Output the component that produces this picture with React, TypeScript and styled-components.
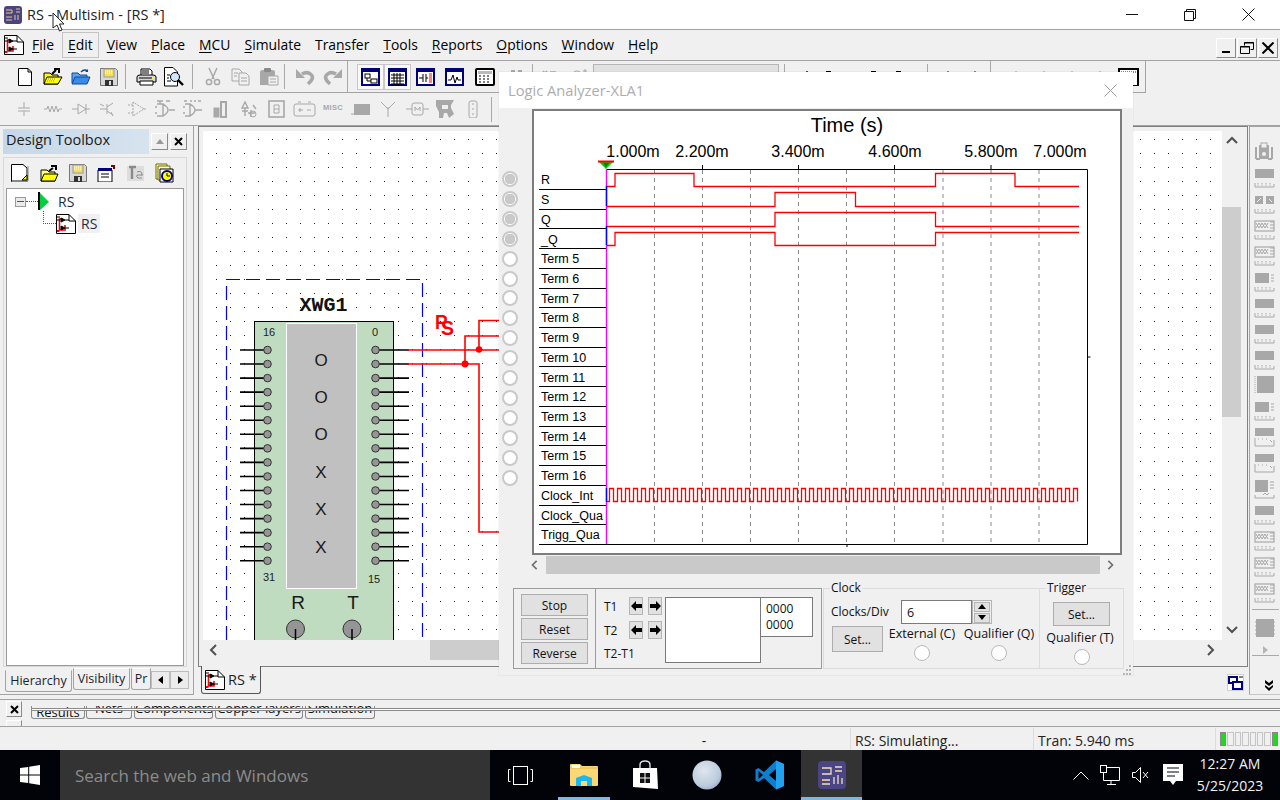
import React from "react";
import styled, { createGlobalStyle } from "styled-components";

const UI = `"Open Sans","Noto Sans",sans-serif`;
const ARIAL = `"Liberation Sans",Arial,sans-serif`;

const Global = createGlobalStyle`
  html, body { margin: 0; padding: 0; background: #f0f0f0; }
  body { font-family: ${UI}; color: #000; }
  * { box-sizing: border-box; }
  svg { display: block; }
`;

const Root = styled.div`
  position: relative; width: 1280px; height: 800px; overflow: hidden;
  display: flex; flex-direction: column; background: #f0f0f0;
`;
/* ---------- title ---------- */
const TitleBar = styled.div`
  height: 30px; background: #fff; border-bottom: 1px solid #a3a3a3;
  display: flex; align-items: center; padding: 0 4px 0 3px; gap: 4px; flex: none;
`;
const TitleText = styled.div`font-size: 14.5px; color: #222; flex: 1; margin-top: -1px;`;
const WinCtl = styled.div`width: 54.5px; height: 29px; display: flex; align-items: center; justify-content: center;`;
/* ---------- menu ---------- */
const MenuBar = styled.div`
  height: 31px; display: flex; align-items: flex-start; padding: 5px 0 0 4px;
  border-bottom: 1px solid #a3a3a3; flex: none; position: relative;
`;
const MenuList = styled.div`display: flex; gap: 2px; margin: -3px 0 0 2px; flex: 1;`;
const MenuItem = styled.div<{ $hover?: boolean }>`
  font-size: 13.9px; line-height: 23px; height: 26px; padding: 0 5px;
  border: 1px solid ${p => (p.$hover ? "#c4c4c4" : "transparent")};
  u { text-underline-offset: 2px; }
`;
const MdiGroup = styled.div`display: flex; gap: 1px; margin-right: 2px; margin-top: 3px;`;
const MdiBtn = styled.div`
  width: 20px; height: 20px; background: #f0f0f0;
  border: 1px solid; border-color: #fff #8a8a8a #8a8a8a #fff;
  display: flex; align-items: center; justify-content: center;
`;
/* ---------- toolbars ---------- */
const Toolbar = styled.div<{ $h: number }>`
  height: ${p => p.$h}px; flex: none; display: flex; align-items: center; padding-left: 11px;
  border-bottom: 1px solid #a3a3a3;
`;
const ToolbarTop = styled(Toolbar)`position: relative;`;
const ToolEnd = styled.div`
  position: absolute; left: 1145px; top: 0; width: 135px; height: 32px;
  background: #f0f0f0; border-left: 1px solid #a3a3a3;
`;
const Slot = styled.div<{ $w?: number; $on?: boolean; $start?: boolean }>`
  width: ${p => p.$w ?? 28}px; height: 26px; flex: none;
  display: flex; align-items: center; justify-content: ${p => (p.$start ? "flex-start" : "center")};
  ${p => (p.$on ? "background:#f8f8f8;box-shadow: inset 0 0 0 1px #c8c8c8;" : "")}
`;
const Sep = styled.div<{ $l?: number; $r?: number; $full?: boolean }>`
  width: 1px; background: #a9a9a9; flex: none;
  height: ${p => (p.$full ? 31 : 25)}px;
  margin-left: ${p => p.$l ?? 0}px; margin-right: ${p => p.$r ?? 0}px;
`;
const Combo = styled.div`width: 186px; height: 24px; background: #e1e1e1; border: 1px solid #b5b5b5; flex: none; align-self: flex-start; margin-top: 3px;`;
/* ---------- main ---------- */
const Main = styled.div`
  height: 574px; display: grid; grid-template-columns: 194px 1054px 32px; flex: none;
`;
const LeftDock = styled.div`
  height: 569px; border-right: 1px solid #a3a3a3; border-bottom: 1px solid #a3a3a3;
  padding: 3px 6px 0 3px; display: flex; flex-direction: column;
`;
const DockHead = styled.div`display: flex; align-items: center; height: 25px; flex: none;`;
const DockTitle = styled.div`
  width: 147px; height: 25px; padding-left: 3px; font-size: 14.5px; line-height: 22px; color: #1a1a1a;
  background: linear-gradient(90deg, #c6d8e8, #d6e3ef);
`;
const HeadBtn = styled.div`
  width: 17px; height: 17px; margin-left: 2px; background: #f0f0f0;
  border: 1px solid; border-color: #fff #8a8a8a #8a8a8a #fff;
  display: flex; align-items: center; justify-content: center;
  &:first-of-type { margin-left: 3px; }
`;
const DockBody = styled.div`
  margin-top: 3px; height: 510px; border: 1px solid #d8d8d8; padding: 0 2px 0 2px;
  display: flex; flex-direction: column; flex: none;
`;
const DockTools = styled.div`height: 30px; display: flex; align-items: center; padding-left: 5px; flex: none;`;
const DockTool = styled.div`width: 30px; display: flex; justify-content: flex-start;`;
const Tree = styled.div`
  flex: 1; background: #fff; border: 1px solid #9a9a9a; position: relative; padding: 3px 0 0 8px;
`;
const TreeRow = styled.div`display: flex; align-items: center; height: 19px;`;
const TreeChild = styled(TreeRow)`margin: 3px 0 0 41px; gap: 2px;`;
const Expander = styled.div`
  width: 11px; height: 10px; border: 1px solid #9a9a9a; background: #eaeaea; display: flex; align-items: center; justify-content: center; flex: none;
  &::after { content: ""; width: 7px; height: 1px; background: #555; }
`;
const Dotted = styled.div`width: 12px; border-top: 1px dotted #555; flex: none;`;
const Elbow = styled.div`
  position: absolute; left: 36px; top: 22px; width: 13px; height: 13px;
  border-left: 1px dotted #555; border-bottom: 1px dotted #555;
`;
const TreeLabel = styled.div<{ $sel?: boolean }>`
  font-size: 14px; line-height: 19px; color: #1d2a44; padding: 0 3px;
  ${p => (p.$sel ? "background:#f0f0f0;" : "margin-left:5px;")}
`;
const DockTabs = styled.div`display: flex; align-items: flex-start; height: 26px; padding: 1px 0 0 2px; flex: none;`;
const DTab = styled.div<{ $active?: boolean; $w: number }>`
  width: ${p => p.$w}px; font-size: 12.5px; text-align: center; white-space: nowrap; overflow: hidden; flex: none;
  height: 22px; line-height: 20px; color: #1d1d2a;
  margin-top: ${p => (p.$active ? 2 : 0)}px; background: #f0f0f0;
  border: 1px solid #a3a3a3; border-top-color: ${p => (p.$active ? "transparent" : "#fff")};
  border-radius: 0 0 3px 3px; margin-right: 1px;
`;
const DArrows = styled.div`display: flex; margin: 3px 0 0 -1px; flex: none;`;
const DArrow = styled.div`
  width: 19px; height: 18px; border: 1px solid #bdbdbd; background: #ececec;
  display: flex; align-items: center; justify-content: center;
`;
const Workspace = styled.div`display: flex; flex-direction: column; padding: 0 0 0 4px;`;
const Frame = styled.div`
  height: 541px; border: 1px solid #808080; padding: 4px 5px 6px 4px; flex: none;
  display: grid; grid-template-columns: 1019px 19px; grid-template-rows: 509px 20px;
`;
const Canvas = styled.div`
  background-color: #fff; position: relative; overflow: hidden;
  background-image: radial-gradient(circle at 13.5px 8.5px, #222 0.72px, transparent 0.85px);
  background-size: 14px 14px;
`;
const Schematic = styled.svg`position: absolute; left: 0; top: 0;`;
const VBar = styled.div`display: flex; flex-direction: column; align-items: stretch; justify-content: space-between; background: #f0f0f0; position: relative;`;
const VThumb = styled.div`position: absolute; left: 0; right: 0; top: 76px; height: 210px; background: #cdcdcd;`;
const ArrowBox = styled.div`height: 20px; display: flex; align-items: center; justify-content: center;`;
const HBar = styled.div`
  grid-column: 1 / span 2; display: flex; align-items: center; justify-content: space-between;
  background: #f0f0f0; position: relative; padding: 0 25px 0 5px;
`;
const HThumb = styled.div`position: absolute; left: 227px; width: 300px; top: 0; bottom: 0; background: #cdcdcd;`;
const DocTabs = styled.div`height: 27px; display: flex; position: relative; flex: none;`;
const DocTab = styled.div`
  width: 60px; height: 28px; margin: -1px 0 0 3px; background: #f0f0f0; flex: none;
  border: 1px solid #555; border-top: none; border-radius: 0 0 3px 3px;
  display: flex; align-items: center; gap: 3px; padding-left: 3px; font-size: 14.5px; color: #222;
`;
const LayoutBtn = styled.div`
  position: absolute; left: 1029px; top: 7px; width: 17px; height: 17px; background: #fff;
  border: 1px solid #d0d0d0; display: flex; align-items: center; justify-content: center;
`;
const RightDock = styled.div`
  border-left: 1px solid #a3a3a3; border-top: 1px solid #a3a3a3; border-bottom: 1px solid #c8c8c8; margin-left: 1px; display: flex; flex-direction: column; align-items: center;
  padding: 15px 0 0 0; height: 569px; position: relative;
`;
const GateSlot = styled.div`height: 25.95px; width: 22px; flex: none;`;
const RightSep = styled.div`width: 27px; height: 1px; background: #a9a9a9; flex: none; margin: 0;`;
const ChipWrap = styled.div`height: 45px; padding-top: 8px; display: flex; flex-direction: column; align-items: center; gap: 8px; flex: none;`;
const ExpandBtn = styled.div`position: absolute; right: 6px; top: 553px;`;
/* ---------- bottom ---------- */
const BottomDock = styled.div`
  height: 28px; flex: none; border-top: 1px solid #a3a3a3; border-bottom: 1px solid #a3a3a3; margin-top: -1px;
  display: flex; position: relative; overflow: hidden; padding-left: 6px; padding-top: 1px; align-items: flex-start;
`;
const CloseBtn = styled.div`
  width: 16px; height: 16px; background: #f0f0f0; border: 1px solid; border-color: #fff #8a8a8a #8a8a8a #fff;
  display: flex; align-items: center; justify-content: center; flex: none;
`;
const CloseBtnStub = styled(CloseBtn)`position: absolute; left: 6px; top: 20px;`;
const ResultTabs = styled.div`
  margin-left: 9px; margin-top: 5px; height: 14px; display: flex; gap: 2px; position: relative; flex: none; width: 1249px; overflow: hidden;
`;
const RTab = styled.div<{ $w: number; $active?: boolean }>`
  width: ${p => p.$w}px; font-size: 13px; flex: none; height: 13px; overflow: hidden; text-align: center; color: #111;
  line-height: ${p => (p.$active ? 12 : 5)}px; margin-right: ${p => (p.$active ? -1 : 0)}px;
  border: 1px solid #8a8a8a; border-top: none; border-radius: 0 0 3px 3px;
`;
const TabRule = styled.div`
  position: absolute; left: 1px; right: 0; top: 2px; height: 3px; background: #fff;
  border-top: 1px solid #8a8a8a; border-bottom: 1px solid #8a8a8a;
`;
const StatusBar = styled.div`height: 23px; flex: none; display: flex; align-items: center; font-size: 14px; color: #222;`;
const StatusGap = styled.div`width: 558px; flex: none;`;
const StatusCell = styled.div<{ $w: number; $center?: boolean }>`
  width: ${p => p.$w}px; flex: none; height: 22px; line-height: 26px; padding-left: 4px;
  ${p => (p.$center ? "text-align:center;padding-left:0;" : "border-left:1px solid #dcdcdc;")}
`;
const Meter = styled.div`
  display: flex; gap: 1px; border-left: 1px solid #dcdcdc; height: 22px; align-items: center; padding-left: 4px;
`;
const MeterCell = styled.div<{ $on?: boolean }>`
  width: 6.4px; height: 14px; background: ${p => (p.$on ? "#1fd81f" : "#f0f0f0")}; border: 1px solid ${p => (p.$on ? "#888" : "#c4c4c4")};
`;
/* ---------- taskbar ---------- */
const Taskbar = styled.div`height: 50px; flex: none; background: #010309; display: flex; color: #fff;`;
const StartBtn = styled.div`width: 60px; display: flex; align-items: center; justify-content: center; flex: none;`;
const SearchBox = styled.div`
  width: 430px; background: #333; flex: none; display: flex; align-items: center; padding-left: 15px;
  color: #8c8c8c; font-size: 17px;
`;
const TaskSlot = styled.div<{ $w: number; $active?: boolean; $run?: boolean; $ml?: number }>`
  width: ${p => p.$w}px; flex: none; display: flex; align-items: center; justify-content: center;
  margin-left: ${p => p.$ml ?? 0}px;
  background: ${p => (p.$active ? "#333" : "transparent")};
  border-bottom: 3px solid ${p => (p.$run ? "#76b9ed" : "transparent")};
  padding-top: 3px;
`;
const TraySpace = styled.div`flex: 1;`;
const TraySlot = styled.div<{ $w: number; $mr?: number }>`
  width: ${p => p.$w}px; flex: none; display: flex; align-items: center; justify-content: center; margin-right: ${p => p.$mr ?? 0}px;
`;
const Clock = styled.div`
  width: 72px; flex: none; text-align: center; font-size: 14px; line-height: 22px; padding-top: 3px; margin-right: 14px; white-space: nowrap; color: #f2f2f2;
`;
/* ---------- logic analyzer ---------- */
const Analyzer = styled.div`
  position: absolute; left: 499px; top: 72px; width: 634px; height: 603px; background: #f0f0f0;
  display: flex; flex-direction: column; box-shadow: 0 0 0 1px rgba(0,0,0,.03);
`;
const AnTitle = styled.div`
  height: 36px; background: #fff; display: flex; align-items: center; justify-content: space-between;
  padding: 0 16px 0 9px; font-size: 14.7px; color: #adadad; flex: none;
`;
const AnTop = styled.div`display: flex; flex: none; padding-top: 1px;`;
const RadioCol = styled.div`
  width: 33px; padding: 62px 0 0 3px; display: flex; flex-direction: column; gap: 3.92px; flex: none;
`;
const Radio = styled.div<{ $on?: boolean }>`
  width: 16px; height: 16px; border-radius: 50%; border: 2px solid #c9c9c9; flex: none;
  background: ${p => (p.$on ? "radial-gradient(circle, #c9c9c9 5px, #fff 5.5px)" : "#fff")};
`;
const RadioSmall = styled(Radio)`border-width: 1px; border-color: #b9b9b9;`;
const PlotFrame = styled.div`
  width: 590px; height: 446px; flex: none; background: #fff; border: 2px solid #7d7d7d; padding: 1px;
`;
const ChartText = styled.text`font-family: ${ARIAL}; fill: #000;`;
const AnScroll = styled.div`
  width: 585px; height: 18px; margin: 1px 0 0 31px; flex: none; display: flex; align-items: center; justify-content: space-between; position: relative;
`;
const AnThumb = styled.div`position: absolute; left: 16px; width: 554px; top: 0; bottom: 0; background: #c9c9c9;`;
const Controls = styled.div`display: flex; margin: 14px 0 0 14px; height: 81px; flex: none; font-size: 12px; color: #111;`;
const RunBox = styled.div`width: 309px; border: 1px solid #9c9c9c; display: flex; flex: none;`;
const BtnCol = styled.div`
  width: 82px; border-right: 1px solid #9c9c9c; padding: 5px 7px; display: flex; flex-direction: column; gap: 2px; flex: none;
`;
const GreyBtn = styled.div<{ $w?: number; $h?: number }>`
  width: ${p => (p.$w ? `${p.$w}px` : "auto")}; height: ${p => p.$h ?? 22}px; background: #e1e1e1; border: 1px solid #adadad;
  display: flex; align-items: center; justify-content: center; flex: none;
`;
const CursorArea = styled.div`display: flex; padding-top: 8px; flex: 1;`;
const CursorCol = styled.div`width: 69px; padding-left: 8px; display: flex; flex-direction: column; flex: none;`;
const CursorRow = styled.div`height: 24px; display: grid; grid-template-columns: 25px 14px 5px 15px; align-items: start;`;
const CursorLabel = styled.div`height: 18px; line-height: 20px;`;
const ArrowBtn = styled.div`
  width: 14px; height: 18px; background: #e1e1e1; border: 1px solid #b5b5b5; display: flex; align-items: center; justify-content: center;
`;
const DiffLabel = styled.div`line-height: 18px;`;
const ReadBox = styled.div<{ $w: number; $h: number }>`
  width: ${p => p.$w}px; height: ${p => p.$h}px; background: #fff; border: 1px solid #7a7a7a; flex: none; padding: 3px 0 0 5px; line-height: 16px; margin-left: ${p => (p.$w < 60 ? -1 : 0)}px;
`;
const Group = styled.div<{ $w: number }>`
  width: ${p => p.$w}px; flex: none; position: relative; border: 1px solid #dcdcdc; margin-left: ${p => (p.$w > 100 ? 1 : -1)}px;
`;
const Legend = styled.div`position: absolute; left: 6px; top: -9px; background: #f0f0f0; padding: 0 1px; line-height: 15px;`;
const ClockRow = styled.div`display: flex; align-items: center; padding: 10px 0 0 7px; height: 35px;`;
const ClockLabel = styled.div`width: 70px; flex: none;`;
const ClockInput = styled.div`
  width: 71px; height: 24px; background: #fff; border: 1px solid #7a7a7a; padding-left: 5px; line-height: 23px; font-size: 12.5px; flex: none;
`;
const Spin = styled.div`
  width: 20px; height: 24px; flex: none; border: 1px solid #b5b5b5; padding: 1px; display: flex; flex-direction: column; gap: 1px;
`;
const SpinBtn = styled.div`flex: 1; background: #e1e1e1; border: 1px solid #b5b5b5; display: flex; align-items: center; justify-content: center;`;
const ClockRow2 = styled.div`display: grid; grid-template-columns: 54px 72px 82px; margin-left: 8px; margin-top: 2px;`;
const RadioLabel = styled.div`display: flex; flex-direction: column; align-items: center; gap: 4px; white-space: nowrap; line-height: 15px; font-size: 12.5px;`;
const TriggerBody = styled.div`display: flex; flex-direction: column; align-items: center; padding-top: 13px; gap: 4px;`;
const TriggerText = styled.div`white-space: nowrap; line-height: 15px; margin: 0 0 0 -3px; font-size: 12.5px;`;
const Grip = styled.svg`position: absolute; right: 1px; bottom: 0px;`;
const CursorPointer = styled.svg`position: absolute; left: 52px; top: 12px;`;

/* ---------- drawings ---------- */
const Sch = ({ s = 20 }: { s?: number }) => (
  <svg width={s} height={s} viewBox="0 0 20 20">
    <path d="M.5.5H13L19.5 7v12.5H.5z" fill="#fff" stroke="#000" />
    <path d="M13 .5V7h6.5" fill="none" stroke="#000" />
    <path d="M7 5 3.5 5V16H9V11" fill="none" stroke="#f00" strokeWidth="1.6" />
    <path d="M1 17h2.5" stroke="#f00" strokeWidth="2" />
    <path d="M5 4v4l4-2zM5 12v4l4-2z M9 6h4M9 14h4M1 6h3M1 3h3" fill="#000" stroke="#000" />
  </svg>
);
const G = "#a8a8a8";
const I = {
  neu: <svg width="14" height="18"><path d="M.5.5H10L13.5 4v13.5H.5z" fill="#fff" stroke="#000" /><path d="M10 .5V4h3.5" fill="none" stroke="#000" /></svg>,
  openY: <svg width="20" height="19"><path d="M1 6h6l2 2h6v9H1z" fill="#ff0" stroke="#000" /><path d="M1 17 4 10h15l-4 7z" fill="#ff0" stroke="#000" /><path d="M9 7 13 3M11 2h5v4" fill="none" stroke="#000" strokeWidth="2" /><path d="M3 12h10M2 14h10" stroke="#888" strokeDasharray="1 1" /></svg>,
  openB: <svg width="20" height="18"><path d="M1 5h6l2 2h7v8H1z" fill="#5aa5f0" stroke="#0a4a9a" /><path d="M1 16 4 9h15l-3 7z" fill="#3c8ae8" stroke="#0a4a9a" /><path d="M10 4Q13 .5 17 3" fill="none" stroke="#0a4a9a" strokeWidth="1.4" /><path d="m17 1v3h-3" fill="#0a4a9a" /></svg>,
  save: <svg width="18" height="18"><path d="M.5.5h15l2 2v15H.5z" fill="#d8d8d8" stroke="#777" /><rect x="4" y="1" width="10" height="8" fill="#f4e060" stroke="#999" /><path d="M5 3h8M5 5h8" stroke="#fff" strokeDasharray="1 1" /><rect x="5" y="12" width="8" height="6" fill="#333" /><rect x="9" y="13" width="2" height="4" fill="#ddd" /></svg>,
  print: <svg width="21" height="18"><path d="M5 1h9l2 2v5H5z" fill="#fff" stroke="#000" /><path d="M1 9q0-2 3-2h13q3 0 3 2v5H1z" fill="#d8d8d8" stroke="#000" /><path d="M4 13h13v4H4z" fill="#fff" stroke="#000" /><path d="M6 3h7M6 5h7" stroke="#000" /><path d="M3 10h15" stroke="#000" /><rect x="16" y="9" width="2" height="2" fill="#ff0" /></svg>,
  preview: <svg width="20" height="20"><path d="M.5.5H9L13.5 5v14H.5z" fill="#fff" stroke="#000" /><circle cx="11" cy="10" r="4.5" fill="#cfe8ff" stroke="#000" /><path d="m14 13 5 5" stroke="#000" strokeWidth="2.4" /><path d="M3 8h3M3 11h2M3 14h4" stroke="#000" /></svg>,
  cut: <svg width="16" height="19" fill="none" stroke={G} strokeWidth="1.5"><path d="M4 1l5 11M12 1 7 12" /><circle cx="4" cy="15" r="2.6" /><circle cx="12" cy="15" r="2.6" /></svg>,
  copy: <svg width="20" height="18" fill="#f0f0f0" stroke={G}><path d="M1 1h7l3 3v9H1z" /><path d="M8 5h7l3 3v9H8z" /><path d="M3 5h4M3 8h3M10 10h6M10 13h6" /></svg>,
  paste: <svg width="20" height="18"><path d="M1 4q0-2 3-2h9q3 0 3 2v13H1z" fill={G} /><rect x="5" y="0" width="7" height="4" rx="1" fill="#8a8a8a" /><path d="M9 8h10v9H9z" fill="#f0f0f0" stroke={G} /><path d="M11 11h6M11 14h6" stroke={G} /></svg>,
  undo: <svg width="20" height="18"><path d="M7 6Q12 3 16 6.500T13 16" fill="none" stroke={G} strokeWidth="3.600" /><path d="M1 1v9h9z" fill={G} /></svg>,
  redo: <svg width="20" height="18"><path d="M13 6Q8 3 4 6.500T7 16" fill="none" stroke={G} strokeWidth="3.600" /><path d="M19 1v9h-9z" fill={G} /></svg>,
};
const Navy = ({ children }: { children: React.ReactNode }) => (
  <svg width="19" height="18"><rect x="1" y="1" width="17" height="16" fill="#fff" stroke="#00007b" strokeWidth="2" /><rect x="1" y="1" width="17" height="3" fill="#00007b" />{children}</svg>
);
const NavyBlock = (
  <Navy><rect x="4" y="6" width="5" height="4" fill="none" stroke="#000" /><rect x="10" y="11" width="6" height="4" fill="none" stroke="#000" /><path d="M6 10v3h4" fill="none" stroke="#000" /></Navy>
);
const NavyGrid = (
  <Navy><path d="M3 7h13M3 10h13M3 13h13M3 16h13M6 5v12M9 5v12M12 5v12" stroke="#000" fill="none" /></Navy>
);
const NavyPart = (
  <Navy><path d="M3 10h4M7 6v8M10 6v8M10 10h2" stroke="#000" fill="none" /><path d="M13 6h3M13 8h3M13 10h3M13 12h3M13 14h3" stroke="#f00" /></Navy>
);
const NavyWave = (
  <Navy><path d="M3 12h3l2-5 2 8 2-6 1 3h3" stroke="#000" fill="none" /></Navy>
);
const Calc = (
  <svg width="20" height="18"><rect x="1" y="1" width="18" height="16" rx="1" fill="#fff" stroke="#000" strokeWidth="2" /><rect x="3" y="3" width="14" height="3" fill="#bbb" /><path d="M4 8h2M8 8h2M12 8h2M4 11h2M8 11h2M12 11h2M4 14h2M8 14h2M12 14h2" stroke="#000" /></svg>
);
const Grey = ({ w = 20, h = 18, children }: { w?: number; h?: number; children: React.ReactNode }) => (
  <svg width={w} height={h} fill="none" stroke={G}>{children}</svg>
);
const Peek = {
  g1: <Grey w={14}><path d="M2 3h4M4 3v4M9 3h4M11 3v4" strokeWidth="2" /></Grey>,
  g2: <Grey w={18}><path d="M3 3l4 4M7 3 3 7M10 4h6" strokeWidth="1.500" /></Grey>,
  g3: <Grey w={20}><circle cx="8" cy="8" r="5" /><path d="M14 3h4M16 1v5" /></Grey>,
  k1: <svg width="16" height="12"><path d="M2 2h2M7 2h2" stroke="#000" strokeWidth="2" /><path d="M11 0v3" stroke="#f00" strokeWidth="2" /></svg>,
  k2: <svg width="10" height="12"><path d="M2 1h5" stroke="#000" strokeWidth="2" /></svg>,
  y1: <svg width="14" height="12"><path d="M7 .5 2 6v6h10V6z" fill="#fff" stroke="#000" /></svg>,
  y2: <svg width="14" height="12"><path d="M7 .5 2 6v6h10V6z" fill="#ff0" stroke="#000" /></svg>,
  c: <svg width="16" height="12"><circle cx="8" cy="8" r="6.500" fill="#fff" stroke="#000" strokeWidth="1.400" /></svg>,
  box: <svg width="21" height="18"><rect x="1" y="1" width="19" height="17" fill="#fff" stroke="#000" strokeWidth="2" /><path d="M3 4h15" stroke="#00c8c8" strokeWidth="2" strokeDasharray="1 1" /></svg>,
};
const MiscText = styled.text`font-family: ${ARIAL}; font-size: 7.500px; font-weight: 700; fill: ${G}; stroke: none; letter-spacing: .3px;`;
const row2: React.ReactNode[] = [
  <Grey><path d="M9 2v6M3 8h12M3 11h12M9 11v5" /></Grey>,
  <Grey><path d="M1 9h3l1-3 2 6 2-6 2 6 2-6 2 6 1-3h3" /></Grey>,
  <Grey><path d="M1 9h6M7 4v10l8-5zM15 4v10M15 9h4" /></Grey>,
  <Grey><path d="M1 9h7M8 4v10M8 7l6-4M8 11l6 4M1 4l4 2M12 12l2 4" /></Grey>,
  <Grey><path d="M1 5h5M1 13h5M6 2v14l11-7zM17 9h3" strokeDasharray="2 1" /></Grey>,
  <Grey w={22}><path d="M3 1h6M6 1v3M12 1h4M3 4h6v12H3M9 4q10 6 0 12M15 10h6M1 7h2M1 13h2" strokeWidth="1.4" /></Grey>,
  <Grey w={22}><path d="M2 1h3M8 1h2M12 1h2M16 1h3M3 4h5v12H3M8 4q10 6 0 12M13 10h7M1 7h2M1 13h2" strokeWidth="1.4" /></Grey>,
  <Grey><rect x="3" y="8" width="5" height="9" fill={G} /><rect x="10" y="2" width="5" height="15" fill="#f0f0f0" strokeWidth="2" /></Grey>,
  <Grey><path d="M6 2 3 8h6zM6 8v8M3 11h6M12 10v7M9 13h7M14 5l3 4" strokeWidth="1.4" /><circle cx="14" cy="14" r="3" /></Grey>,
  <Grey><rect x="2" y="1" width="15" height="16" strokeWidth="1.6" /><path d="M7 5h5v8H7zM7 9h5" /></Grey>,
  <Grey w={24}><rect x="1" y="4" width="21" height="12" rx="2" /><path d="M5 10h5M7 8v4M14 10h4" /><path d="M5 2h3M15 2h3" /></Grey>,
  <svg width="22" height="18"><MiscText x="1" y="10">MISC</MiscText></svg>,
  <svg width="22" height="18"><rect x="4" y="4" width="16" height="11" fill={G} /><path d="M1 14h3" stroke={G} /></svg>,
  <Grey><path d="M9 7v10M2 2l7 7 7-7" /></Grey>,
  <Grey w={24}><rect x="7" y="3" width="11" height="12" rx="2" /><path d="M1 9h6M18 9h6M10 11V7l2.5 3L15 7v4" /></Grey>,
  <svg width="20" height="20"><path d="M1 1h18l-3 5v3l3 6-5 4-2-5H9l-1 5H4v-6L1 7z" fill={G} /><path d="M7 6h6v4H7z" fill="#f0f0f0" /></svg>,
  <Grey w={14}><rect x="3" y="1" width="8" height="17" rx="2" /><path d="M6 4h2M6 9h2M6 14h2" /></Grey>,
];
const Tool = {
  newdoc: <svg width="18" height="18"><path d="M.5.5H12L16 4v13.5H.5z" fill="#fff" stroke="#000" /><path d="M1 17h16" stroke="#888" strokeWidth="2" /><path d="m17 2v15" stroke="#888" strokeWidth="1" /><path d="M11 16l5-5v5z" fill="#ff0" stroke="#000" /></svg>,
  open: <svg width="19" height="18"><path d="M1 6h6l2 2h6v9H1z" fill="#ffff80" stroke="#000" /><path d="M1 17 4 10h14l-3 7z" fill="#ff0" stroke="#000" /><path d="M9 7l4-3M11 2h5v4" fill="none" stroke="#000" strokeWidth="2" /></svg>,
  newsave: I.save,
  prop: <svg width="19" height="18"><path d="M1 6h14v12H1z" fill="#fff" stroke="#000" /><rect x="1" y="4" width="14" height="3" fill="#00007b" /><path d="M4 10h8M4 13h8" stroke="#000" /><path d="M14 2h3v3" fill="none" stroke="#800000" strokeWidth="2" /></svg>,
  te: <svg width="19" height="18"><rect x="1" y="2" width="17" height="15" fill="#ddd" /><path d="M3 3h7M6 3v12" stroke="#8a8a8a" strokeWidth="2.4" /><path d="M11 11h6M11 8q5-2 5 3M16 14h-4q-2-1-1-3" stroke="#8a8a8a" fill="none" /></svg>,
  clock: <svg width="19" height="20"><path d="M1 1h11v15H1z" fill="#ffffb0" stroke="#6a6a00" /><path d="M3 3h12v14H3z" fill="#ffffd8" stroke="#6a6a00" /><path d="M5 6h13v13H5z" fill="#fff" stroke="#000" /><circle cx="12" cy="13" r="5" fill="#ff0" stroke="#00007b" strokeWidth="2" /><path d="M12 10v3h3" stroke="#000" fill="none" /></svg>,
};
const Gate = ({ v }: { v: number }) => {
  const bottom = (
    <>
      <path d="M1 19h19v-3M1 19v-4" fill="none" stroke={G} />
      <path d="M4 15v3M8 15v3M12 15v3M16 15v3" stroke={G} strokeDasharray="1.5 .8" />
    </>
  );
  return (
    <svg width="22" height="21" viewBox="0 0 22 21">
      {v === 0 ? (
        <>
          <rect x="5" y="3" width="10" height="14" fill={G} /><rect x="7" y="1" width="6" height="5" fill="#f0f0f0" stroke={G} />
          <circle cx="10" cy="12" r="2" fill="#f0f0f0" /><path d="M2 5v12M18 5v12M2 17h4M14 17h4" stroke={G} strokeWidth="2" fill="none" />
        </>
      ) : v === 1 ? (
        <><rect x="1" y="1" width="19" height="9" fill={G} />{bottom}</>
      ) : v === 2 ? (
        <><rect x="1" y="2" width="8" height="8" fill={G} /><rect x="12" y="2" width="8" height="8" fill={G} /><path d="M3 8l4-4M15 5l3 3" stroke="#f0f0f0" />{bottom}</>
      ) : v === 3 ? (
        <><rect x="1" y="1" width="19" height="10" fill="#f0f0f0" stroke={G} strokeWidth="1.2" /><path d="M2 3l3 5 3-5 3 5 3-5" stroke={G} fill="none" /><path d="M2 8l3-5 3 5 3-5 3 5" stroke={G} fill="none" /><path d="M16 2h4M16 5h4M16 8h4" stroke={G} />{bottom}</>
      ) : v === 4 ? (
        <><rect x="1" y="1" width="14" height="10" fill={G} /><path d="M17 3h3M17 6h3M17 9h3" stroke={G} />{bottom}</>
      ) : v === 5 ? (
        <><path d="M1 1v17" stroke={G} strokeDasharray="1 1" /><rect x="3" y="1" width="17" height="17" fill={G} /></>
      ) : v === 6 ? (
        <><rect x="1" y="1" width="19" height="8" fill={G} /><path d="M1 11v8h19v-6" fill="none" stroke={G} /><path d="M4 12h1M8 12h1M12 12h1M16 13l2 2" stroke={G} /></>
      ) : (
        <><rect x="1" y="1" width="13" height="12" fill={G} /><path d="M16 3h4M16 6h4M16 9h4" stroke={G} /><path d="M1 16v3h19v-3" fill="none" stroke={G} /><path d="M9 16l2-2 2 2 2-2" stroke={G} fill="none" /></>
      )}
    </svg>
  );
};
const gates = [0, 1, 2, 3, 3, 4, 1, 1, 1, 5, 4, 6, 6, 7, 1, 3, 3, 3];
const Chev = ({ d, c = "#505050", s = 12 }: { d: string; c?: string; s?: number }) => {
  const p: Record<string, string> = { u: "M1 8l5-5 5 5", n: "M1 3l5 5 5-5", l: "M8 1 3 6l5 5", r: "M4 1l5 5-5 5" };
  return <svg width={s} height={s} viewBox="0 0 12 12"><path d={p[d]} fill="none" stroke={c} strokeWidth="2" /></svg>;
};

const Schema = () => {
  const pins = Array.from({ length: 16 }, (_, i) => 350 + i * 14.05);
  const letters = ["O", "O", "O", "X", "X", "X"];
  const ly = [360, 397, 434, 472, 509, 547];
  return (
    <Schematic width="1019" height="509" viewBox="203 131 1019 509">
      <path d="M226.5 640V279.5H422.5V640" fill="none" stroke="#0000ff" strokeDasharray="14 6" strokeWidth="1.2" />
      <rect x="254.5" y="321.5" width="139" height="330" fill="#c0dcc0" stroke="#000" />
      <rect x="286.5" y="323.5" width="70" height="265" fill="#c0c0c0" stroke="#fff" />
      <text x="323.5" y="311" textAnchor="middle" fontFamily="'Liberation Mono',monospace" fontWeight="700" fontSize="20" fill="#111">XWG1</text>
      {pins.map(y => (
        <g key={y}>
          <path d={`M240 ${y}H267M375 ${y}H409`} stroke="#000" strokeWidth="1.6" />
          <circle cx="267.5" cy={y} r="3.8" fill="#959595" stroke="#333" />
          <circle cx="375.5" cy={y} r="3.8" fill="#959595" stroke="#333" />
        </g>
      ))}
      <g fontFamily={ARIAL} fontSize="11" fill="#222" textAnchor="middle">
        <text x="269" y="336">16</text><text x="375" y="336">0</text>
        <text x="269" y="581">31</text><text x="374" y="583">15</text>
      </g>
      <g fontFamily={ARIAL} fontSize="17" fill="#1a1a1a" textAnchor="middle">
        {letters.map((l, i) => <text key={i} x="321" y={ly[i] + 6}>{l}</text>)}
      </g>
      <g fontFamily={ARIAL} fontSize="19" fill="#1a1a1a" textAnchor="middle">
        <text x="298" y="609">R</text><text x="353" y="609">T</text>
      </g>
      <circle cx="295.5" cy="629" r="9" fill="#959595" stroke="#333" />
      <circle cx="352" cy="629" r="9" fill="#959595" stroke="#333" />
      <path d="M295.5 629v11M352 629v11" stroke="#000" strokeWidth="1.5" />
      <path d="M408 350H500M408 364H479V532H500M479 350V320.5H500M465 364V336H500" fill="none" stroke="#f00" strokeWidth="1.6" />
      <circle cx="479" cy="349.5" r="3.2" fill="#f00" /><circle cx="465" cy="364" r="3.4" fill="#f00" />
      <g fontFamily={ARIAL} fontSize="20" fontWeight="700" fill="#f00">
        <text x="435" y="329" textLength="13" lengthAdjust="spacingAndGlyphs">R</text>
        <text x="441" y="335" textLength="13" lengthAdjust="spacingAndGlyphs">S</text>
      </g>
    </Schematic>
  );
};

const Chart = () => {
  const labels = ["R", "S", "Q", "_Q", ...Array.from({ length: 12 }, (_, i) => `Term ${i + 5}`), "Clock_Int", "Clock_Qua", "Trigg_Qua"];
  const grid = [654.5, 702.5, 750.5, 798.5, 846.5, 894.5, 943, 991, 1039];
  const tick = [
    ["1.000m", 633], ["2.200m", 702], ["3.400m", 798], ["4.600m", 895], ["5.800m", 991], ["7.000m", 1060],
  ] as const;
  let cx = 609.5;
  let clock = `M607 501.5H${cx}V488.5`;
  let high = true;
  while (cx < 1076) {
    cx += 4;
    clock += `H${cx}V${high ? 501.5 : 488.5}`;
    high = !high;
  }
  return (
    <svg width="584" height="440" viewBox="535 112 584 440">
      <ChartText x="847" y="132" fontSize="20" textAnchor="middle">Time (s)</ChartText>
      {tick.map(([t, x]) => <ChartText key={t} x={x} y="157" fontSize="16" textAnchor="middle">{t}</ChartText>)}
      {grid.map(x => <path key={x} d={`M${x} 170V544`} stroke="#8a8a8a" strokeDasharray="4 4" />)}
      <path d="M606 169.5H1087.5V544.5H539" fill="none" stroke="#000" />
      <path d="M702.5 165v4M798.5 165v4M894.5 165v4M991 165v4M847 544v3M1087.5 357h3" stroke="#000" />
      {labels.map((l, i) => (
        <g key={l}>
          <ChartText x="541" y={184.4 + i * 19.72} fontSize="12.5">{l}</ChartText>
          {i < 18 && <path d={`M539 ${Math.round(189 + i * 19.72) + 0.5}H606`} stroke="#000" />}
        </g>
      ))}
      <path d="M606.5 169V544" stroke="#ff00ff" strokeWidth="1.4" />
      <path d="M606.5 186V206M606.5 226V245M606.5 488V502" stroke="#0000ff" strokeWidth="1.4" />
      <path d="M607 186.5H615V173.5H694V186.5H935.5V173.5H1015V186.5H1079" fill="none" stroke="#f00" strokeWidth="1.3" />
      <path d="M607 206.5H775V192.5H855.5V206.5H1079" fill="none" stroke="#f00" strokeWidth="1.3" />
      <path d="M607 226.5H775V212.5H935.5V226.5H1079" fill="none" stroke="#f00" strokeWidth="1.3" />
      <path d="M607 245.5H615V232.5H775V245.5H935.5V232.5H1079" fill="none" stroke="#f00" strokeWidth="1.3" />
      <path d={clock} fill="none" stroke="#f00" strokeWidth="1.3" />
      <path d="M598 161h16l-8 8z" fill="#00d000" />
      <path d="M598 161.5h16" stroke="#f00" strokeWidth="2" />
      <path d="M603 163h6l-3 4z" fill="#008000" />
    </svg>
  );
};

const Tri = ({ d, c = "#000" }: { d: "l" | "r" | "u" | "n"; c?: string }) => {
  const p = { l: "M6 0v8L1 4z", r: "M2 0v8l5-4z", u: "M4 1l4 5H0z", n: "M0 1h8L4 6z" }[d];
  return <svg width="8" height="8"><path d={p} fill={c} /></svg>;
};
const BArrow = ({ d }: { d: "l" | "r" }) => (
  <svg width="11" height="10" viewBox="0 0 11 10">
    <path d={d === "l" ? "M0 5l5-5v3h6v4H5v3z" : "M11 5 6 0v3H0v4h6v3z"} fill="#000" />
  </svg>
);
const WinLogo = ({ s = 20, c = "#fff" }: { s?: number; c?: string }) => (
  <svg width={s} height={s} viewBox="0 0 20 20" fill={c}>
    <path d="M0 3l8.2-1.1v7.6H0zM9.2 1.7 20 0v9.5H9.2zM0 10.5h8.2v7.6L0 17zM9.2 10.5H20V20L9.2 18.3z" />
  </svg>
);

export default function App() {
  return (
    <Root>
      <Global />
      <TitleBar>
        <svg width="20" height="20" viewBox="0 0 20 20">
          <rect x="1" y="1" width="18" height="18" rx="3" fill="#4a4480" />
          <path d="M3 5h6v3H3M13 4h4M13 7h4M3 12h6M3 15h6M12 15v-5M15 15v-5" stroke="#e6c58c" fill="none" />
        </svg>
        <TitleText>RS - Multisim - [RS *]</TitleText>
        <WinCtl><svg width="12" height="1"><rect width="12" height="1" fill="#111" /></svg></WinCtl>
        <WinCtl><svg width="12" height="12"><path d="M.5 2.5h9v9h-9zM2.5 2.5v-2h9v9h-2" fill="none" stroke="#111" /></svg></WinCtl>
        <WinCtl><svg width="13" height="13"><path d="M.5.5l12 12M12.5.5l-12 12" stroke="#111" /></svg></WinCtl>
      </TitleBar>

      <MenuBar>
        <Sch s={20} />
        <MenuList>
          <MenuItem><u>F</u>ile</MenuItem>
          <MenuItem $hover><u>E</u>dit</MenuItem>
          <MenuItem><u>V</u>iew</MenuItem>
          <MenuItem><u>P</u>lace</MenuItem>
          <MenuItem><u>M</u>CU</MenuItem>
          <MenuItem><u>S</u>imulate</MenuItem>
          <MenuItem>Tra<u>n</u>sfer</MenuItem>
          <MenuItem><u>T</u>ools</MenuItem>
          <MenuItem><u>R</u>eports</MenuItem>
          <MenuItem><u>O</u>ptions</MenuItem>
          <MenuItem><u>W</u>indow</MenuItem>
          <MenuItem><u>H</u>elp</MenuItem>
        </MenuList>
        <MdiGroup>
          <MdiBtn><svg width="12" height="12"><rect x="2" y="9" width="8" height="2" fill="#000" /></svg></MdiBtn>
          <MdiBtn><svg width="14" height="12"><path d="M4.5 3.5v-3h9v7h-3M.5 4.5h9v7h-9z" fill="none" stroke="#000" /><path d="M4 1h10M0 5h10" stroke="#000" /></svg></MdiBtn>
          <MdiBtn><svg width="14" height="12"><path d="M1.5 .5l11 11M12.5 .5l-11 11" stroke="#000" strokeWidth="2" /></svg></MdiBtn>
        </MdiGroup>
      </MenuBar>

      <ToolbarTop $h={32}>
        <Slot>{I.neu}</Slot><Slot>{I.openY}</Slot><Slot>{I.openB}</Slot><Slot>{I.save}</Slot>
        <Sep $l={2} $r={6} />
        <Slot>{I.print}</Slot><Slot>{I.preview}</Slot>
        <Sep $l={4} $r={6} />
        <Slot>{I.cut}</Slot><Slot>{I.copy}</Slot><Slot>{I.paste}</Slot>
        <Sep $l={1} $r={6} />
        <Slot>{I.undo}</Slot><Slot>{I.redo}</Slot>
        <Sep $full $r={9} />
        <Slot $w={27} $on>{NavyBlock}</Slot>
        <Slot $w={27} $on>{NavyGrid}</Slot>
        <Slot $w={28}>{NavyPart}</Slot>
        <Slot $w={30}>{NavyWave}</Slot>
        <Slot $w={32}>{Calc}</Slot>
        <Slot $w={30}>{Peek.g1}</Slot>
        <Sep $l={1} $r={7} />
        <Slot $w={29} $start>{Peek.g2}</Slot>
        <Slot $w={24} $start>{Peek.g3}</Slot>
        <Combo />
        <Sep $l={5} $r={11} />
        <Slot $w={28} $start>{Peek.k1}</Slot>
        <Slot $w={45} $start>{Peek.k2}</Slot>
        <Slot $w={25} $start>{Peek.k2}</Slot>
        <Slot $w={33} $start>{Peek.k2}</Slot>
        <Sep $r={13} />
        <Slot $w={27} $start>{Peek.y1}</Slot>
        <Slot $w={22} $start>{Peek.y2}</Slot>
        <Sep $full $r={17} />
        <Slot $w={28} $start>{Peek.c}</Slot>
        <Slot $w={28} $start>{Peek.c}</Slot>
        <Slot $w={28} $start>{Peek.c}</Slot>
        <Slot $w={26} $start>{Peek.c}</Slot>
        <Slot $w={21} $start>{Peek.box}</Slot>
        <ToolEnd />
      </ToolbarTop>
      <Toolbar $h={33}>
        {row2.map((n, i) => <Slot key={i}>{n}</Slot>)}
        <Sep $l={4} />
      </Toolbar>

      <Main>
        <LeftDock>
          <DockHead>
            <DockTitle>Design Toolbox</DockTitle>
            <HeadBtn><Tri d="u" c="#999" /></HeadBtn>
            <HeadBtn><svg width="9" height="9"><path d="M1 1l7 7M8 1 1 8" stroke="#000" strokeWidth="2" /></svg></HeadBtn>
          </DockHead>
          <DockBody>
            <DockTools>
              <DockTool>{Tool.newdoc}</DockTool><DockTool>{Tool.open}</DockTool><DockTool>{Tool.newsave}</DockTool>
              <DockTool>{Tool.prop}</DockTool><DockTool>{Tool.te}</DockTool><DockTool>{Tool.clock}</DockTool>
            </DockTools>
            <Tree>
              <TreeRow>
                <Expander /><Dotted />
                <svg width="12" height="19"><path d="M1 0v18" stroke="#000" strokeWidth="2" /><path d="M2 1l9 9-9 8z" fill="#00d040" /></svg>
                <TreeLabel>RS</TreeLabel>
              </TreeRow>
              <Elbow />
              <TreeChild><Sch s={20} /><TreeLabel $sel>RS</TreeLabel></TreeChild>
            </Tree>
          </DockBody>
          <DockTabs>
            <DTab $active $w={67}>Hierarchy</DTab>
            <DTab $w={57}>Visibility</DTab>
            <DTab $w={20}>Pr</DTab>
            <DArrows>
              <DArrow><Tri d="l" /></DArrow>
              <DArrow><Tri d="r" /></DArrow>
            </DArrows>
          </DockTabs>
        </LeftDock>

        <Workspace>
          <Frame>
            <Canvas><Schema /></Canvas>
            <VBar>
              <VThumb />
              <ArrowBox><Chev d="u" /></ArrowBox>
              <ArrowBox><Chev d="n" /></ArrowBox>
            </VBar>
            <HBar>
              <HThumb />
              <Chev d="l" />
              <Chev d="r" />
            </HBar>
          </Frame>
          <DocTabs>
            <DocTab><Sch s={20} />RS *</DocTab>
            <LayoutBtn>
              <svg width="15" height="15"><path d="M1 2h8v6H1z" fill="none" stroke="#00007b" strokeWidth="2" /><path d="M5 7h9v7H5z" fill="#fff" stroke="#00007b" strokeWidth="2" /><path d="M12 1v2M14 1v2" stroke="#000" /></svg>
            </LayoutBtn>
          </DocTabs>
        </Workspace>

        <RightDock>
          {gates.map((v, i) => <GateSlot key={i}><Gate v={v} /></GateSlot>)}
          <RightSep />
          <ChipWrap>
            <svg width="20" height="20"><rect x="1" y="1" width="18" height="18" fill={G} /><path d="M0 4h1M0 8h1M0 12h1M0 16h1M19 4h1M19 8h1M19 12h1M19 16h1" stroke={G} /></svg>
            <Tri d="r" c="#b5b5b5" />
          </ChipWrap>
          <RightSep />
          <ExpandBtn>
            <svg width="9" height="11"><path d="M0 0l4 3 4-3v3L4 6 0 3zM0 5l4 3 4-3v2L4 11 0 7z" fill="#000" /></svg>
          </ExpandBtn>
        </RightDock>
      </Main>

      <BottomDock>
        <CloseBtn><svg width="9" height="9"><path d="M1 1l7 7M8 1 1 8" stroke="#000" strokeWidth="2" /></svg></CloseBtn>
        <CloseBtnStub />
        <ResultTabs>
          <RTab $w={54} $active>Results</RTab>
          <RTab $w={46}>Nets</RTab>
          <RTab $w={79}>Components</RTab>
          <RTab $w={88}>Copper layers</RTab>
          <RTab $w={70}>Simulation</RTab>
          <TabRule />
        </ResultTabs>
      </BottomDock>

      <StatusBar>
        <StatusGap />
        <StatusCell $w={292} $center>-</StatusCell>
        <StatusCell $w={183}>RS: Simulating...</StatusCell>
        <StatusCell $w={182}>Tran: 5.940 ms</StatusCell>
        <Meter>
          {[1, 0, 0, 0, 0, 0, 0, 1].map((m, i) => <MeterCell key={i} $on={!!m} />)}
        </Meter>
      </StatusBar>

      <Taskbar>
        <StartBtn><WinLogo /></StartBtn>
        <SearchBox>Search the web and Windows</SearchBox>
        <TaskSlot $w={60}>
          <svg width="25" height="19"><rect x="5.5" y=".5" width="14" height="18" fill="none" stroke="#fff" /><path d="M2.5 3.5H.5v12h2M22.5 3.5h2v12h-2" fill="none" stroke="#fff" /></svg>
        </TaskSlot>
        <TaskSlot $w={52} $ml={8} $run>
          <svg width="28" height="24" viewBox="0 0 28 24"><path d="M0 2q0-1 1-1h9l2 2h15q1 0 1 1v18q0 1-1 1H1q-1 0-1-1z" fill="#f9d875" /><path d="M0 5h28" stroke="#e6b84e" /><rect x="2" y="2" width="8" height="3" fill="#fff" /><path d="M6 23V15l8-3 8 3v8h-5v-5h-6v5z" fill="#1eb6ee" /></svg>
        </TaskSlot>
        <TaskSlot $w={62} $ml={4}>
          <svg width="26" height="30" viewBox="0 0 26 30">
            <path d="M8 8V5q0-4 5-4t5 4v3" fill="none" stroke="#ddd" strokeWidth="1.4" />
            <path d="M1 8h24l1 21-25-2z" fill="#fff" />
            <path d="M8 13h4.5v4.5H8zM13.5 13H18v4.5h-4.5zM8 18.5h4.5V23H8zM13.5 18.5H18V23h-4.5z" fill="#111" />
          </svg>
        </TaskSlot>
        <TaskSlot $w={62}>
          <svg width="30" height="30"><defs><radialGradient id="ball" cx=".4" cy=".35" r=".75"><stop offset="0" stopColor="#dfe6ee" /><stop offset=".7" stopColor="#bccbdc" /><stop offset="1" stopColor="#96a5bd" /></radialGradient></defs><circle cx="15" cy="15" r="14.5" fill="url(#ball)" /></svg>
        </TaskSlot>
        <TaskSlot $w={63}>
          <svg width="30" height="30" viewBox="0 0 30 30"><path d="M21 .5 9 12 3.5 8 .5 9.5v11L3.5 22 9 18l12 11.500 8-3.500V4z" fill="#0e7fcc" /><path d="M21 .5V29.500L29 26V4z" fill="#22a2ee" /><path d="M3.500 11v8L8 15zM21 9l-7 6 7 6z" fill="#010309" /></svg>
        </TaskSlot>
        <TaskSlot $w={61} $active $run>
          <svg width="28" height="28" viewBox="0 0 28 28"><rect width="28" height="28" rx="4" fill="#4b4583" /><path d="M4 7h9v6H4M17 6h7M17 10h7M4 19h8M4 23h8M16 23v-7M20 23v-9M24 23v-6" fill="none" stroke="#e9e1c9" strokeWidth="1.3" /><path d="M17 10h3M4 19h3" stroke="#f0b14d" strokeWidth="1.3" /></svg>
        </TaskSlot>
        <TraySpace />
        <TraySlot $w={18} $mr={5}><svg width="16" height="9"><path d="M.5 8.500l7.500-7.500 7.500 7.500" fill="none" stroke="#fff" /></svg></TraySlot>
        <TraySlot $w={30}><svg width="20" height="20"><path d="M3.500 2.500h16v13h-16zM11 16v3M7 19.500h9" fill="none" stroke="#fff" /><rect x=".5" y=".5" width="6" height="7" fill="#010309" stroke="#fff" /></svg></TraySlot>
        <TraySlot $w={30}><svg width="17" height="16"><path d="M.5 5.500h3l5-5v15l-5-5h-3z" fill="none" stroke="#fff" /><path d="M11 5l5 6M16 5l-5 6" stroke="#fff" /></svg></TraySlot>
        <TraySlot $w={36} $mr={3}><svg width="20" height="22"><path d="M0 0h20v17h-7l-3 4-3-4H0z" fill="#fff" /><path d="M4 4h12M4 8h12M4 12h8" stroke="#010309" /></svg></TraySlot>
        <Clock>12:27 AM<br />5/25/2023</Clock>
      </Taskbar>

      <Analyzer>
        <AnTitle>
          <span>Logic Analyzer-XLA1</span>
          <svg width="13" height="13"><path d="M.5.5l12 12M12.5.5l-12 12" stroke="#9a9a9a" /></svg>
        </AnTitle>
        <AnTop>
          <RadioCol>
            {Array.from({ length: 16 }, (_, i) => <Radio key={i} $on={i < 4} />)}
          </RadioCol>
          <PlotFrame><Chart /></PlotFrame>
        </AnTop>
        <AnScroll>
          <AnThumb />
          <Chev d="l" s={10} c="#707070" />
          <Chev d="r" s={10} c="#707070" />
        </AnScroll>
        <Controls>
          <RunBox>
            <BtnCol>
              <GreyBtn>Stop</GreyBtn><GreyBtn>Reset</GreyBtn><GreyBtn>Reverse</GreyBtn>
            </BtnCol>
            <CursorArea>
              <CursorCol>
                <CursorRow><CursorLabel>T1</CursorLabel><ArrowBtn><BArrow d="l" /></ArrowBtn><span /><ArrowBtn><BArrow d="r" /></ArrowBtn></CursorRow>
                <CursorRow><CursorLabel>T2</CursorLabel><ArrowBtn><BArrow d="l" /></ArrowBtn><span /><ArrowBtn><BArrow d="r" /></ArrowBtn></CursorRow>
                <DiffLabel>T2-T1</DiffLabel>
              </CursorCol>
              <ReadBox $w={96} $h={66} />
              <ReadBox $w={53} $h={40}>0000<br />0000</ReadBox>
            </CursorArea>
          </RunBox>
          <Group $w={217}>
            <Legend>Clock</Legend>
            <ClockRow>
              <ClockLabel>Clocks/Div</ClockLabel>
              <ClockInput>6</ClockInput>
              <Spin><SpinBtn><Tri d="u" /></SpinBtn><SpinBtn><Tri d="n" /></SpinBtn></Spin>
            </ClockRow>
            <ClockRow2>
              <GreyBtn $w={51} $h={26}>Set...</GreyBtn>
              <RadioLabel>External (C)<RadioSmall /></RadioLabel>
              <RadioLabel>Qualifier (Q)<RadioSmall /></RadioLabel>
            </ClockRow2>
          </Group>
          <Group $w={85}>
            <Legend>Trigger</Legend>
            <TriggerBody>
              <GreyBtn $w={57} $h={24}>Set...</GreyBtn>
              <TriggerText>Qualifier (T)</TriggerText>
              <RadioSmall />
            </TriggerBody>
          </Group>
        </Controls>
        <Grip width="9" height="10" viewBox="0 0 9 10"><path d="M6 0h2v2H6zM3 4h2v2H3zM6 4h2v2H6zM0 8h2v2H0zM3 8h2v2H3zM6 8h2v2H6z" fill="#b5b5b5" /></Grip>
      </Analyzer>

      <CursorPointer width="14" height="20" viewBox="0 0 14 20"><path d="M1 1v15l4-3 2.500 6 2.500-1-2.500-6H12z" fill="#fff" stroke="#222" /></CursorPointer>
    </Root>
  );
}
